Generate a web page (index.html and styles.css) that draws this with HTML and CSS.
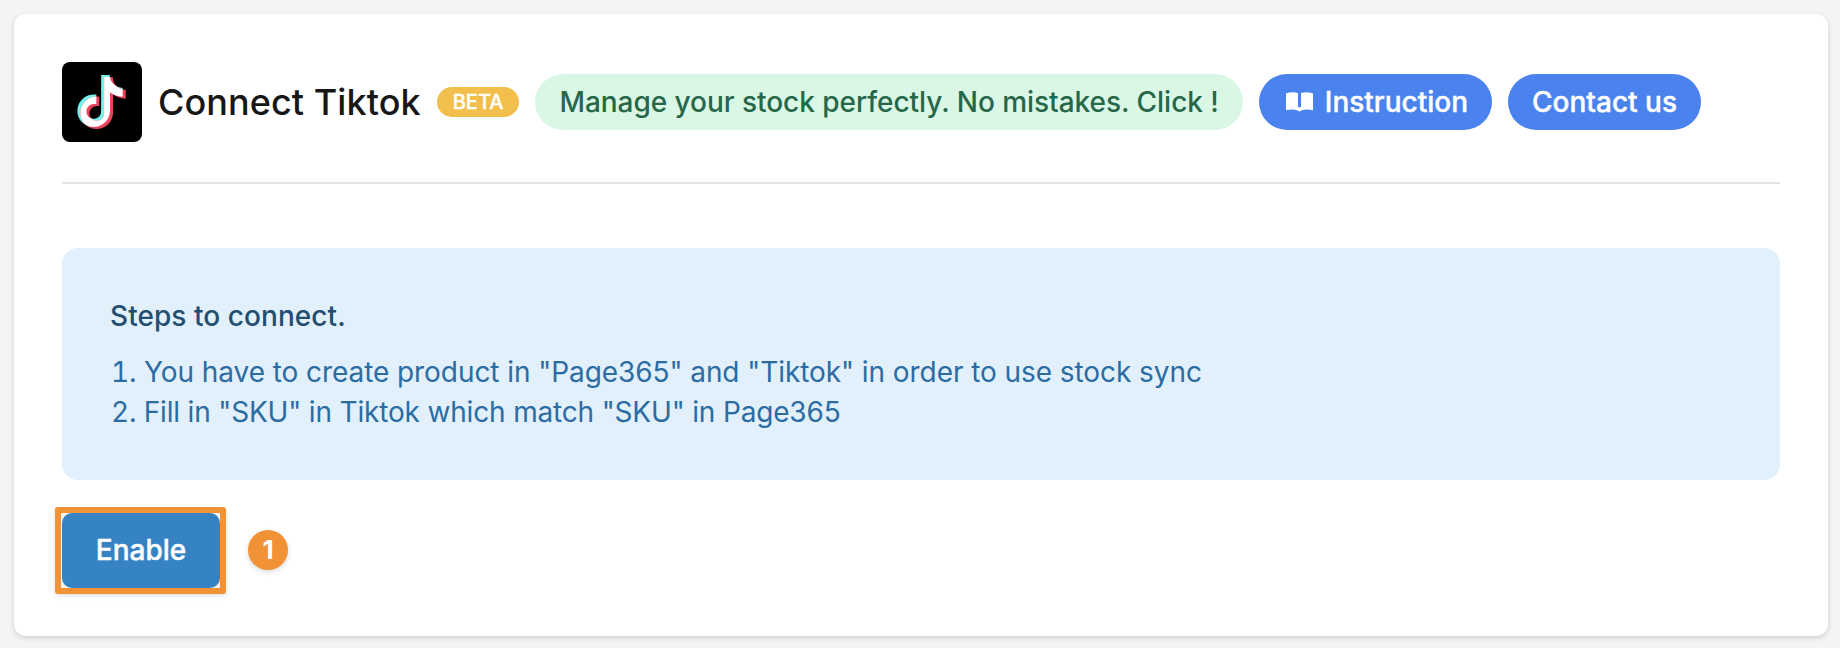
FILE: index.html
```html
<!DOCTYPE html>
<html lang="en">
<head>
    <meta charset="UTF-8">
    <title>Connect Tiktok</title>
    <link rel="stylesheet" href="styles.css">
</head>
<body>
    <section class="card">
        <header class="card-header">
            <svg class="logo" viewBox="0 0 80 80">
                <defs>
                    <path id="note" d="M12.525.02c1.31-.02 2.61-.01 3.91-.02.08 1.53.63 3.09 1.75 4.17 1.12 1.11 2.7 1.62 4.24 1.79v4.03c-1.44-.05-2.89-.35-4.2-.97-.57-.26-1.1-.59-1.62-.93-.01 2.92.01 5.84-.02 8.75-.08 1.4-.54 2.79-1.35 3.94-1.31 1.92-3.58 3.17-5.91 3.21-1.43.08-2.86-.31-4.08-1.03-2.02-1.19-3.44-3.37-3.65-5.71-.02-.5-.03-1-.01-1.49.18-1.9 1.12-3.72 2.58-4.96 1.66-1.44 3.98-2.13 6.15-1.72.02 1.48-.04 2.96-.04 4.44-.99-.32-2.15-.23-3.02.37-.63.41-1.11 1.04-1.36 1.75-.21.51-.15 1.07-.14 1.61.24 1.64 1.82 3.02 3.5 2.87 1.12-.01 2.19-.66 2.77-1.61.19-.33.4-.67.41-1.06.1-1.79.06-3.57.07-5.36.01-4.03-.01-8.05.02-12.07z"/>
                    <clipPath id="overlap">
                        <use href="#note" transform="translate(12 13) scale(2.17)"/>
                    </clipPath>
                </defs>
                <use href="#note" transform="translate(12 13) scale(2.17)" fill="#74f0ed"/>
                <use href="#note" transform="translate(15 15) scale(2.17)" fill="#ea435c"/>
                <g clip-path="url(#overlap)">
                    <use href="#note" transform="translate(15 15) scale(2.17)" fill="#fff"/>
                </g>
            </svg>
            <h1 class="title">Connect Tiktok</h1>
            <span class="badge">BETA</span>
            <a class="pill pill-green">Manage your stock perfectly. No mistakes. Click !</a>
            <a class="pill pill-blue">
                <svg class="book" viewBox="0 0 27 20">
                    <path d="M0 1.500C4-.2 8-.2 12 1V14.200C12 15 12.600 15.400 13.500 15.400S15 15 15 14.200V1C19-.2 23-.2 27 1.500V18.300C22.500 17.200 18.500 17.400 15.200 18.500Q14.300 19.600 13.500 19.600T11.800 18.500C8.500 17.400 4.500 17.200 0 18.300z"/>
                </svg>
                Instruction
            </a>
            <a class="pill pill-blue">Contact us</a>
        </header>
        <div class="steps">
            <h2 class="steps-title">Steps to connect.</h2>
            <ol class="steps-list">
                <li>You have to create product in "Page365" and "Tiktok" in order to use stock sync</li>
                <li>Fill in "SKU" in Tiktok which match "SKU" in Page365</li>
            </ol>
        </div>
        <div class="actions">
            <div class="highlight">
                <button class="btn" type="button">Enable</button>
            </div>
            <span class="marker">1</span>
        </div>
    </section>
</body>
</html>
```
FILE: styles.css
```css
* {
    box-sizing: border-box;
    margin: 0;
    padding: 0;
}
body {
    padding: 14px 12px 12px 14px;
    background-color: #f4f4f4;
    font-family: Inter, "Liberation Sans", sans-serif;
    font-size: 28px;
    line-height: 40px;
}
.card {
    height: 622px;
    padding: 48px;
    border-radius: 12px;
    background-color: #fff;
    box-shadow: 0 2px 6px rgba(0, 0, 0, .1), 0 2px 4px rgba(0, 0, 0, .06);
}
.card-header {
    display: flex;
    align-items: center;
    gap: 16px;
    height: 122px;
    padding-bottom: 40px;
    border-bottom: 2px solid #e5e5e5;
}
.logo {
    width: 80px;
    height: 80px;
    border-radius: 8px;
    background-color: #000;
}
.title {
    font-size: 36px;
    font-weight: 500;
    letter-spacing: .07px;
    color: #171717;
    white-space: nowrap;
}
.badge {
    padding: 0 16px;
    height: 30px;
    border-radius: 15px;
    background-color: #f2be4c;
    color: #fff;
    font-size: 20px;
    font-weight: 500;
    line-height: 30px;
    -webkit-text-stroke: .4px #fff;
}
.pill {
    display: flex;
    align-items: center;
    height: 56px;
    padding: 0 24px;
    border-radius: 28px;
    font-weight: 500;
    white-space: nowrap;
}
.pill-green {
    background-color: #daf7e6;
    color: #276749;
    letter-spacing: -.04px;
}
.pill-blue {
    background-color: #4a83ee;
    color: #fff;
    -webkit-text-stroke: .4px #fff;
}
.book {
    width: 27px;
    height: 20px;
    margin: 0 12px 0 3px;
    fill: #fff;
    -webkit-text-stroke: 0;
}
.steps {
    height: 232px;
    margin-top: 64px;
    padding: 48px;
    border-radius: 16px;
    background-color: #e2f0fc;
    color: #2b6ca3;
}
.steps-title {
    margin-bottom: 16px;
    font-size: 28px;
    font-weight: 500;
    letter-spacing: .06px;
    color: #234e70;
}
.steps-list {
    padding-left: 1px;
    list-style-position: inside;
}
.steps-list li {
    letter-spacing: -.07px;
}
.steps-list li:last-child {
    letter-spacing: -.17px;
}
.actions {
    display: flex;
    align-items: center;
    gap: 22px;
    margin: 27px 0 0 -7px;
}
.highlight {
    width: 171px;
    height: 87px;
    padding: 0 0 0 1px;
    border: 6px solid #f09235;
    border-radius: 3px;
    background-color: #f6f6f6;
    box-shadow: 0 2px 5px rgba(0, 0, 0, .12);
}
.btn {
    display: block;
    width: 100%;
    height: 100%;
    padding-bottom: 2px;
    border: none;
    border-radius: 10px;
    background-color: #3583c2;
    color: #fff;
    font: 500 28px Inter, "Liberation Sans", sans-serif;
    -webkit-text-stroke: .4px #fff;
}
.marker {
    width: 40px;
    height: 40px;
    margin-bottom: 2px;
    border-radius: 50%;
    background-color: #f09235;
    box-shadow: 0 2px 5px rgba(0, 0, 0, .15);
    color: #fff;
    font-size: 26px;
    font-weight: 700;
    line-height: 40px;
    text-align: center;
}
```
